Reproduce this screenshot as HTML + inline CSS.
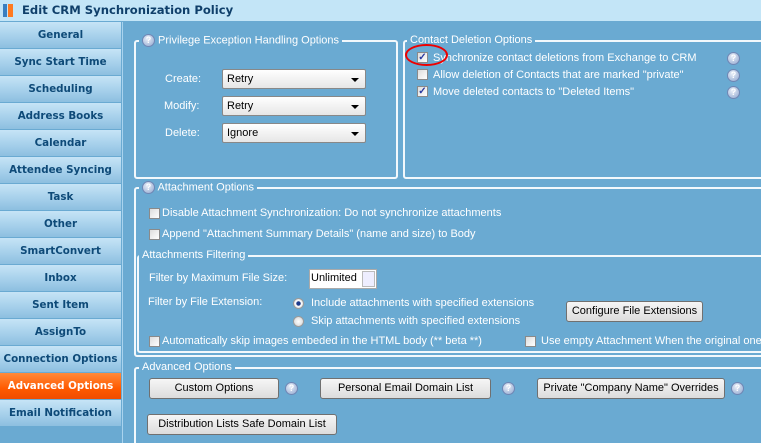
<!DOCTYPE html><html><head><style>
*{box-sizing:border-box;margin:0;padding:0}
html,body{width:761px;height:443px;overflow:hidden}
body{background:#6aaad2;font-family:"Liberation Sans",sans-serif;font-size:11px;color:#fff;position:relative}
.abs{position:absolute}
#title{left:0;top:0;width:761px;height:21px;background:#c3e5f7;color:#0f3f6a;font-size:11.6px;font-weight:bold;padding:3px 0 0 22px;font-family:"DejaVu Sans",sans-serif}
.nav{position:absolute;left:0;width:121px;height:26px;background:linear-gradient(#c6e4f6,#a9d2ec 50%,#8dbfe0);color:#0e4a78;font-weight:bold;font-size:10.3px;text-align:center;line-height:27px;font-family:"DejaVu Sans",sans-serif}
.nav.sel{background:linear-gradient(#ff8a3a,#ff5a00 60%,#f04c00);color:#fff}
.box{position:absolute;border:2px solid #f2f8fc;border-radius:3px}
.leg{position:absolute;background:#6aaad2;padding:0 3px;top:-8px;left:3px;white-space:nowrap;font-size:11px;line-height:13px}
.help{display:inline-block;width:13px;height:13px;border-radius:50%;background:radial-gradient(circle at 40% 35%,#e8eef8,#8fa6cf);border:1px solid #6f86b4;color:#fff;font-size:9px;font-weight:bold;text-align:center;line-height:11px;vertical-align:middle}
.t{position:absolute;white-space:nowrap;font-size:11px;line-height:13px}
.sel2{position:absolute;width:144px;height:20px;border:1px solid #888;border-radius:2px;background:linear-gradient(#fff,#e6e6e6);color:#000;font-size:11px;padding:3px 4px}
.sel2:after{content:"";position:absolute;right:6px;top:8px;border:4px solid transparent;border-top:4px solid #000;border-bottom:0}
.cb{position:absolute;width:11px;height:11px;border:1px solid #8a8a8a;background:linear-gradient(135deg,#dcdcdc,#fff);color:#2a3aa0;font-size:10px;line-height:9px;text-align:center;font-weight:bold}
.btn{position:absolute;height:21px;border:1px solid #707070;border-radius:3px;background:linear-gradient(#f6f6f6,#dcdcdc);color:#000;font-size:11px;text-align:center;line-height:19px;white-space:nowrap}
.rb{position:absolute;width:11px;height:11px;border-radius:50%;border:1px solid #9a9a9a;background:radial-gradient(#fff,#d0d0d0)}
</style></head><body>
<div id="title" class="abs">Edit CRM Synchronization Policy</div>
<div class="abs" style="left:3px;top:4px;width:4px;height:13px;background:#3a7fc0"></div>
<div class="abs" style="left:8px;top:4px;width:5px;height:13px;background:#ff7a20"></div>
<div class="abs" style="left:122px;top:22px;width:1px;height:421px;background:#a9d3ee"></div>
<div class="nav" style="top:22px">General</div>
<div class="nav" style="top:49px">Sync Start Time</div>
<div class="nav" style="top:76px">Scheduling</div>
<div class="nav" style="top:103px">Address Books</div>
<div class="nav" style="top:130px">Calendar</div>
<div class="nav" style="top:157px">Attendee Syncing</div>
<div class="nav" style="top:184px">Task</div>
<div class="nav" style="top:211px">Other</div>
<div class="nav" style="top:238px">SmartConvert</div>
<div class="nav" style="top:265px">Inbox</div>
<div class="nav" style="top:292px">Sent Item</div>
<div class="nav" style="top:319px">AssignTo</div>
<div class="nav" style="top:346px">Connection Options</div>
<div class="nav sel" style="top:373px">Advanced Options</div>
<div class="nav" style="top:400px">Email Notification</div>

<div class="box" style="left:134px;top:40px;width:264px;height:139px"><div class="leg"><span class="help">?</span> Privilege Exception Handling Options</div></div>
<div class="t" style="left:165px;top:73px">Create:</div>
<div class="t" style="left:164px;top:100px">Modify:</div>
<div class="t" style="left:165px;top:127px">Delete:</div>
<div class="sel2" style="left:222px;top:69px">Retry</div>
<div class="sel2" style="left:222px;top:96px">Retry</div>
<div class="sel2" style="left:222px;top:123px">Ignore</div>

<div class="box" style="left:403px;top:40px;width:362px;height:139px"><div class="leg" style="left:2px">Contact Deletion Options</div></div>
<div class="cb" style="left:417px;top:52px">✓</div><div class="t" style="left:433px;top:52px">Synchronize contact deletions from Exchange to CRM</div>
<div class="cb" style="left:417px;top:69px"></div><div class="t" style="left:433px;top:69px">Allow deletion of Contacts that are marked "private"</div>
<div class="cb" style="left:417px;top:86px">✓</div><div class="t" style="left:433px;top:86px">Move deleted contacts to "Deleted Items"</div>
<span class="help abs" style="left:727px;top:52px">?</span>
<span class="help abs" style="left:727px;top:69px">?</span>
<span class="help abs" style="left:727px;top:86px">?</span>
<div class="abs" style="left:405px;top:44px;width:43px;height:22px;border:2px solid #e00;border-radius:50%"></div>

<div class="box" style="left:134px;top:187px;width:630px;height:170px"><div class="leg"><span class="help">?</span> Attachment Options</div></div>
<div class="cb" style="left:149px;top:208px"></div><div class="t" style="left:162px;top:207px">Disable Attachment Synchronization: Do not synchronize attachments</div>
<div class="cb" style="left:149px;top:229px"></div><div class="t" style="left:162px;top:228px">Append "Attachment Summary Details" (name and size) to Body</div>
<div class="box" style="left:137px;top:255px;width:627px;height:98px"><div class="leg" style="left:0">Attachments Filtering</div></div>
<div class="t" style="left:149px;top:272px">Filter by Maximum File Size:</div>
<div class="abs" style="left:309px;top:269px;width:68px;height:20px;background:#fff;border:1px solid #aaa;color:#000;font-size:11px;padding:2px 1px">Unlimited</div>
<div class="abs" style="left:362px;top:271px;width:13px;height:16px;border:1px solid #bbb;background:#eef"></div>
<div class="t" style="left:148px;top:296px">Filter by File Extension:</div>
<div class="rb" style="left:293px;top:298px;background:radial-gradient(#1d3a8a 30%,#fff 40%,#ccc)"></div><div class="t" style="left:311px;top:297px">Include attachments with specified extensions</div>
<div class="rb" style="left:293px;top:316px"></div><div class="t" style="left:311px;top:315px">Skip attachments with specified extensions</div>
<div class="btn" style="left:566px;top:301px;width:137px">Configure File Extensions</div>
<div class="cb" style="left:149px;top:336px"></div><div class="t" style="left:162px;top:335px">Automatically skip images embeded in the HTML body (** beta **)</div>
<div class="cb" style="left:525px;top:336px"></div><div class="t" style="left:541px;top:335px">Use empty Attachment When the original one</div>

<div class="box" style="left:134px;top:367px;width:630px;height:90px"><div class="leg">Advanced Options</div></div>
<div class="btn" style="left:149px;top:378px;width:130px">Custom Options</div>
<span class="help abs" style="left:285px;top:382px">?</span>
<div class="btn" style="left:320px;top:378px;width:171px">Personal Email Domain List</div>
<span class="help abs" style="left:502px;top:382px">?</span>
<div class="btn" style="left:537px;top:378px;width:188px">Private "Company Name" Overrides</div>
<span class="help abs" style="left:731px;top:382px">?</span>
<div class="btn" style="left:147px;top:414px;width:190px">Distribution Lists Safe Domain List</div>
</body></html>
